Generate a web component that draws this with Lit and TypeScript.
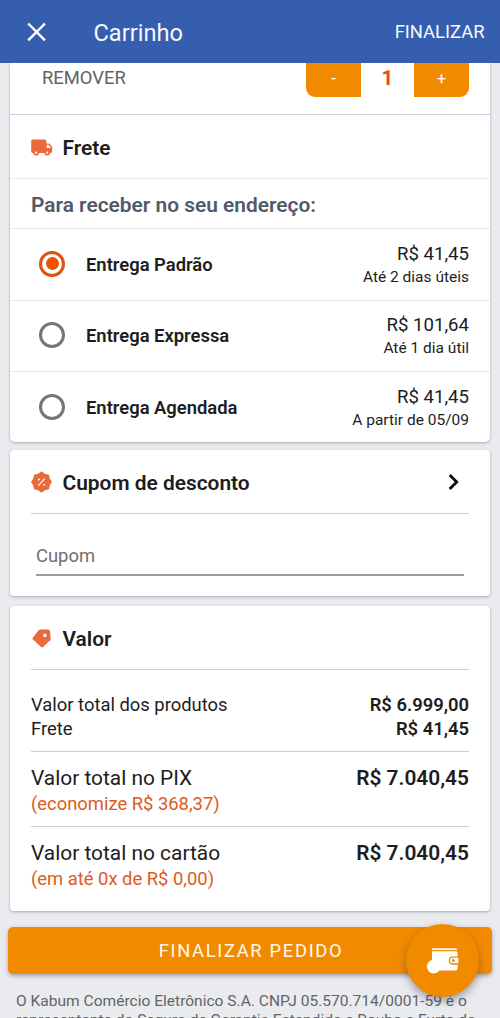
import { LitElement, html, css, svg } from "lit";
import { customElement, property, state } from "lit/decorators.js";
import { classMap } from "lit/directives/class-map.js";

interface ShippingOption {
  name: string;
  price: string;
  term: string;
}

const OPTIONS: ShippingOption[] = [
  { name: "Entrega Padrão", price: "R$ 41,45", term: "Até 2 dias úteis" },
  { name: "Entrega Expressa", price: "R$ 101,64", term: "Até 1 dia útil" },
  { name: "Entrega Agendada", price: "R$ 41,45", term: "A partir de 05/09" },
];

const truck = svg`
  <path fill="#ea6a3c" d="M2 0.6H13.6Q15.4 0.6 15.4 2.4V4.4H17.4Q18.2 4.4 18.8 5L20.6 7.2Q21.2 7.8 21.2 8.6V12.6Q21.2 14 19.8 14H1.6Q0.2 14 0.2 12.6V2.4Q0.2 0.6 2 0.6Z"/>
  <path fill="#fff" d="M15.8 5.8H17.6L19.6 8.4V8.9H15.8Z"/>
  <circle cx="5.2" cy="13.7" r="2.8" fill="#ea6a3c"/>
  <circle cx="16.2" cy="13.7" r="2.8" fill="#ea6a3c"/>
  <circle cx="5.2" cy="13.7" r="1.1" fill="#fff"/>
  <circle cx="16.2" cy="13.7" r="1.1" fill="#fff"/>`;

const badge = svg`
  <path fill="#ea6a3c" stroke="#ea6a3c" stroke-width="2.2" stroke-linejoin="round" d="M10.5 1.2L13.4 3.2L17 4L17.8 7.6L19.8 10.5L17.8 13.4L17 17L13.4 17.8L10.5 19.8L7.6 17.8L4 17L3.2 13.4L1.2 10.5L3.2 7.6L4 4L7.6 3.2Z"/>
  <path d="M7.6 13.8L13.6 7.4" stroke="#fff" stroke-width="1.2" stroke-linecap="round"/>
  <circle cx="7.9" cy="7.9" r="1" fill="#fff"/><circle cx="13.2" cy="13.2" r="1" fill="#fff"/>`;

const tag = svg`
  <path fill="#ea6a3c" d="M8.6 1.6L16.8 1.6Q18.2 1.7 18.4 3.1L19.2 10.8Q19.2 11.7 18.6 12.3L11.6 19Q10.6 19.8 9.6 19L1.2 11.3Q0.6 10.6 1.2 9.8L7.2 2.3Q7.8 1.6 8.6 1.6Z"/>
  <circle cx="13.4" cy="7.4" r="1.8" fill="#fff"/>`;

@customElement("section-title")
class SectionTitle extends LitElement {
  @property() label = "";
  @property() icon = "truck";
  @property({ type: Boolean }) arrow = false;

  static styles = css`
    :host { display: flex; align-items: center; height: 63px; }
    .icon { display: block; width: 22px; height: 22px; flex: none; }
    .label { flex: 1; margin-left: 9.5px; padding-top: 2px; font-size: 20.9px; font-weight: 600; line-height: 26px; color: #1d1d1d; }
    .arrow { display: block; width: 12px; height: 20px; margin-right: 9px; }
  `;

  render() {
    const art = this.icon === "truck" ? truck : this.icon === "badge" ? badge : tag;
    const box = this.icon === "truck" ? "0 -3 22 22" : this.icon === "badge" ? "0 -0.5 22 22" : "-0.5 -1 22 22";
    return html`
      <svg class="icon" viewBox=${box}>${art}</svg>
      <span class="label">${this.label}</span>
      ${this.arrow
        ? html`<svg class="arrow" viewBox="0 0 12 20"><path d="M1.7 3L8.7 10L1.7 17" fill="none" stroke="#0a0a0a" stroke-width="2.8"/></svg>`
        : null}
    `;
  }
}

@customElement("app-root")
class AppRoot extends LitElement {
  @state() selected = 0;
  @state() quantity = 1;

  static styles = css`
    :host { display: block; font-family: Roboto, sans-serif; color: #1d1d1d; }
    .screen { position: relative; display: flex; flex-direction: column; height: 1018px; overflow: hidden; background: #e9ebef; }
    .bar { flex: none; display: flex; align-items: center; height: 63px; padding: 0 15.5px 0 27px; box-sizing: border-box; background: #355fae; color: #f5f8fd; }
    .close { display: block; width: 20px; height: 20px; }
    .heading { flex: 1; margin-left: 46.5px; font-size: 23.6px; line-height: 30px; padding-top: 2px; }
    .action { font-size: 18.4px; line-height: 24px; padding-top: 1px; }
    .card { flex: none; box-sizing: border-box; margin: 0 10px; background: #fff; border-radius: 4px; box-shadow: 0 1px 3px rgba(60, 66, 80, 0.38); }
    .first { height: 379px; border-radius: 0 0 5px 5px; clip-path: inset(0 -6px -6px -6px); }
    .coupon { height: 146px; margin-top: 8px; padding: 0 21px; }
    .totals { height: 305px; margin-top: 10px; padding: 0 21px; }
    .product { display: flex; justify-content: space-between; height: 51px; border-bottom: 1px solid #cdd0d6; padding: 0 21px 0 32px; }
    .remove { font-size: 18.4px; line-height: 30px; color: #626262; }
    .stepper { display: flex; height: 34px; }
    .step { width: 55px; height: 34px; line-height: 31px; text-align: center; color: #fff; background: #f28a00; font-size: 17px; }
    .minus { border-bottom-left-radius: 9px; }
    .plus { border-bottom-right-radius: 9px; }
    .amount { width: 53px; line-height: 31px; text-align: center; color: #dd5412; font-size: 20.5px; font-weight: 700; }
    .shipping { padding: 0 21px; border-bottom: 1px solid #e9e9e9; }
    .where { height: 49.4px; padding: 0 21px; border-bottom: 1px solid #e9e9e9; font-size: 20.9px; font-weight: 600; line-height: 52px; color: #525a69; }
    .option { display: flex; align-items: center; height: 71.4px; box-sizing: border-box; padding: 0 21px 2px 29px; border-bottom: 1px solid #e9e9e9; }
    .option:last-child { border-bottom: 0; }
    .radio { flex: none; display: flex; align-items: center; justify-content: center; width: 26px; height: 26px; box-sizing: border-box; border: 3px solid #767676; border-radius: 50%; }
    .on { border-color: #dd5412; }
    .dot { width: 13px; height: 13px; border-radius: 50%; background: #f05000; }
    .name { flex: 1; margin-left: 21px; padding-top: 2px; font-size: 18.4px; font-weight: 600; line-height: 24px; }
    .cost { text-align: right; padding-top: 2px; }
    .price { font-size: 18.6px; line-height: 24px; }
    .term { font-size: 15.5px; line-height: 22px; }
    .ruled { border-bottom: 1px solid #ccced2; }
    .field { margin: 17px 5px 0; height: 43px; border-bottom: 2px solid #9c9c9c; font-size: 18.4px; line-height: 49px; color: #707070; }
    .lines { padding: 22.5px 0 9.5px; border-bottom: 1px solid #ccced2; }
    .line { display: flex; justify-content: space-between; font-size: 18.4px; line-height: 24.5px; }
    .total { height: 75px; box-sizing: border-box; padding-top: 12px; border-bottom: 1px solid #ccced2; }
    .total:last-child { border-bottom: 0; }
    .big { display: flex; justify-content: space-between; font-size: 20.9px; line-height: 28px; }
    .note { font-size: 18.4px; line-height: 24px; color: #dd5b1e; }
    .strong { font-weight: 600; }
    .submit { flex: none; margin: 16px 8px 0; height: 47px; border-radius: 5px; background: #f28a00; box-shadow: 0 2px 4px rgba(60, 60, 70, 0.4); color: #fff8ea; text-align: center; font-size: 18.4px; line-height: 48px; letter-spacing: 1.65px; text-indent: 2px; }
    .legal { flex: none; margin: 18px 0 0 16px; font-size: 15.56px; line-height: 19px; color: #636466; white-space: nowrap; }
    .fab { position: absolute; left: 406px; top: 924px; width: 73px; height: 73px; border-radius: 50%; background: #f28a00; box-shadow: 0 4px 9px rgba(50, 50, 60, 0.42); }
    .wallet { display: block; width: 73px; height: 73px; }
  `;

  render() {
    return html`
      <div class="screen">
        <header class="bar">
          <svg class="close" viewBox="0 0 20 20"><path d="M1.2 1.5L18 18.3M18 1.5L1.2 18.3" fill="none" stroke="#fff" stroke-width="2.4"/></svg>
          <span class="heading">Carrinho</span>
          <span class="action">FINALIZAR</span>
        </header>

        <section class="card first">
          <div class="product">
            <span class="remove">REMOVER</span>
            <div class="stepper">
              <span class="step minus" @click=${() => (this.quantity = Math.max(1, this.quantity - 1))}>-</span>
              <span class="amount">${this.quantity}</span>
              <span class="step plus" @click=${() => this.quantity++}>+</span>
            </div>
          </div>
          <div class="shipping"><section-title icon="truck" label="Frete"></section-title></div>
          <div class="where">Para receber no seu endereço:</div>
          <div>
            ${OPTIONS.map(
              (o, i) => html`
                <div class="option" @click=${() => (this.selected = i)}>
                  <span class=${classMap({ radio: true, on: i === this.selected })}>
                    ${i === this.selected ? html`<span class="dot"></span>` : null}
                  </span>
                  <span class="name">${o.name}</span>
                  <div class="cost">
                    <div class="price">${o.price}</div>
                    <div class="term">${o.term}</div>
                  </div>
                </div>
              `
            )}
          </div>
        </section>

        <section class="card coupon">
          <div class="ruled"><section-title icon="badge" label="Cupom de desconto" arrow></section-title></div>
          <div class="field">Cupom</div>
        </section>

        <section class="card totals">
          <div class="ruled"><section-title icon="tag" label="Valor"></section-title></div>
          <div class="lines">
            <div class="line"><span>Valor total dos produtos</span><span class="strong">R$ 6.999,00</span></div>
            <div class="line"><span>Frete</span><span class="strong">R$ 41,45</span></div>
          </div>
          <div class="total">
            <div class="big"><span>Valor total no PIX</span><span class="strong">R$ 7.040,45</span></div>
            <div class="note">(economize R$ 368,37)</div>
          </div>
          <div class="total">
            <div class="big"><span>Valor total no cartão</span><span class="strong">R$ 7.040,45</span></div>
            <div class="note">(em até 0x de R$ 0,00)</div>
          </div>
        </section>

        <div class="submit">FINALIZAR PEDIDO</div>
        <div class="legal">
          O Kabum Comércio Eletrônico S.A. CNPJ 05.570.714/0001-59 é o<br />
          representante do Seguro de Garantia Estendida e Roubo e Furto do
        </div>

        <div class="fab">
          <svg class="wallet" viewBox="0 0 73 73">
            <g fill="#fff">
              <path d="M26 25.2Q26 24.2 27 24.2H49.5Q51 24.2 51 25.5V26H26Z"/>
              <path d="M26 27.2H49.8Q51.6 27.2 51.6 29V44.5Q51.6 46.4 49.8 46.4H30L26 40Z"/>
              <circle cx="27.7" cy="42.6" r="6.8"/>
            </g>
            <path d="M53 33.2H46.5Q43.4 33.2 43.4 36.6Q43.4 40 46.5 40H53Z" fill="#fff" stroke="#f28a00" stroke-width="1.3"/>
            <circle cx="47.4" cy="36.6" r="1.5" fill="#f28a00"/>
          </svg>
        </div>
      </div>
    `;
  }
}
